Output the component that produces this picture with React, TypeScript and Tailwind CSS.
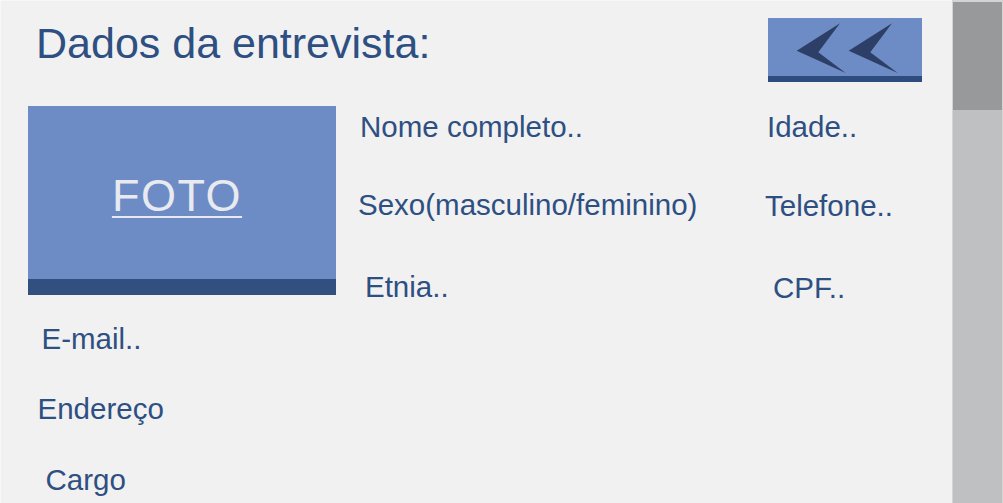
import type { ReactNode } from 'react'

const font = { fontFamily: '"Liberation Sans", Arial, sans-serif' }

// One field placeholder. Offsets come from the mock-up, which is not aligned
// to a grid, so each label carries its own nudge.
function Label({ children, className = '' }: { children: ReactNode; className?: string }) {
  return (
    <p className={`whitespace-nowrap text-[29.5px] leading-[29.5px] text-[#2e4f82] ${className}`}>
      {children}
    </p>
  )
}

function BackButton() {
  return (
    <button type="button" aria-label="Voltar" className="flex h-[64px] w-[154px] flex-col">
      <span className="block h-[58px] w-full bg-[#6d8cc5]">
        <svg viewBox="0 0 154 58" width="154" height="58" aria-hidden="true">
          <polygon points="72,5.3 50.3,34.3 77.7,55 28.7,32.7" fill="#2d3f66" />
          <polygon points="124,5.3 102.3,34.3 129.7,55 80.7,32.7" fill="#2d3f66" />
        </svg>
      </span>
      <span className="block h-[6px] w-full bg-[#2f4c7e]" />
    </button>
  )
}

function Photo() {
  return (
    <div className="flex h-[189px] w-[308px] flex-col">
      <div className="flex h-[173px] items-center justify-center bg-[#6d8cc5] pr-[10px] pt-[5px]">
        <span className="text-[45px] leading-[45px] tracking-[1.5px] text-[#e8eaf0] underline decoration-[1.5px] underline-offset-[5px]">
          FOTO
        </span>
      </div>
      <div className="h-[16px] bg-[#31507f]" />
    </div>
  )
}

export default function App() {
  return (
    <div style={font} className="flex h-[503px] w-[1003px] overflow-hidden bg-[#f1f1f1]">
      <main className="flex-1 border-l border-t border-[#f8f8f8]">
        <header className="flex h-[105px] items-start justify-between pl-[35px] pr-[30px] pt-[17px]">
          <h1 className="mt-[4px] text-[43px] leading-[43px] font-normal text-[#2e4f82]">
            Dados da entrevista:
          </h1>
          <BackButton />
        </header>

        <section className="flex">
          <div className="flex w-[335px] flex-col pl-[27px]">
            <Photo />
            <Label className="ml-[13.5px] mt-[29px]">E-mail..</Label>
            <Label className="ml-[9.5px] mt-[40.5px]">Endereço</Label>
            <Label className="ml-[17.5px] mt-[41.5px]">Cargo</Label>
          </div>

          <div className="ml-[22px] flex w-[406px] flex-col pt-[6px]">
            <Label className="ml-[2px]">Nome completo..</Label>
            <Label className="mt-[48.5px]">Sexo(masculino/feminino)</Label>
            <Label className="ml-[7px] mt-[52.5px]">Etnia..</Label>
          </div>

          <div className="ml-[1px] flex flex-col pt-[6px]">
            <Label className="ml-[2px]">Idade..</Label>
            <Label className="mt-[49.5px]">Telefone..</Label>
            <Label className="ml-[8px] mt-[52.5px]">CPF..</Label>
          </div>
        </section>
      </main>

      <div className="h-full w-[51px] border-l border-r border-t-2 border-[#d4d4d5] bg-[#bfc0c1]">
        <div className="h-[108px] bg-[#98999a]" />
      </div>
    </div>
  )
}
